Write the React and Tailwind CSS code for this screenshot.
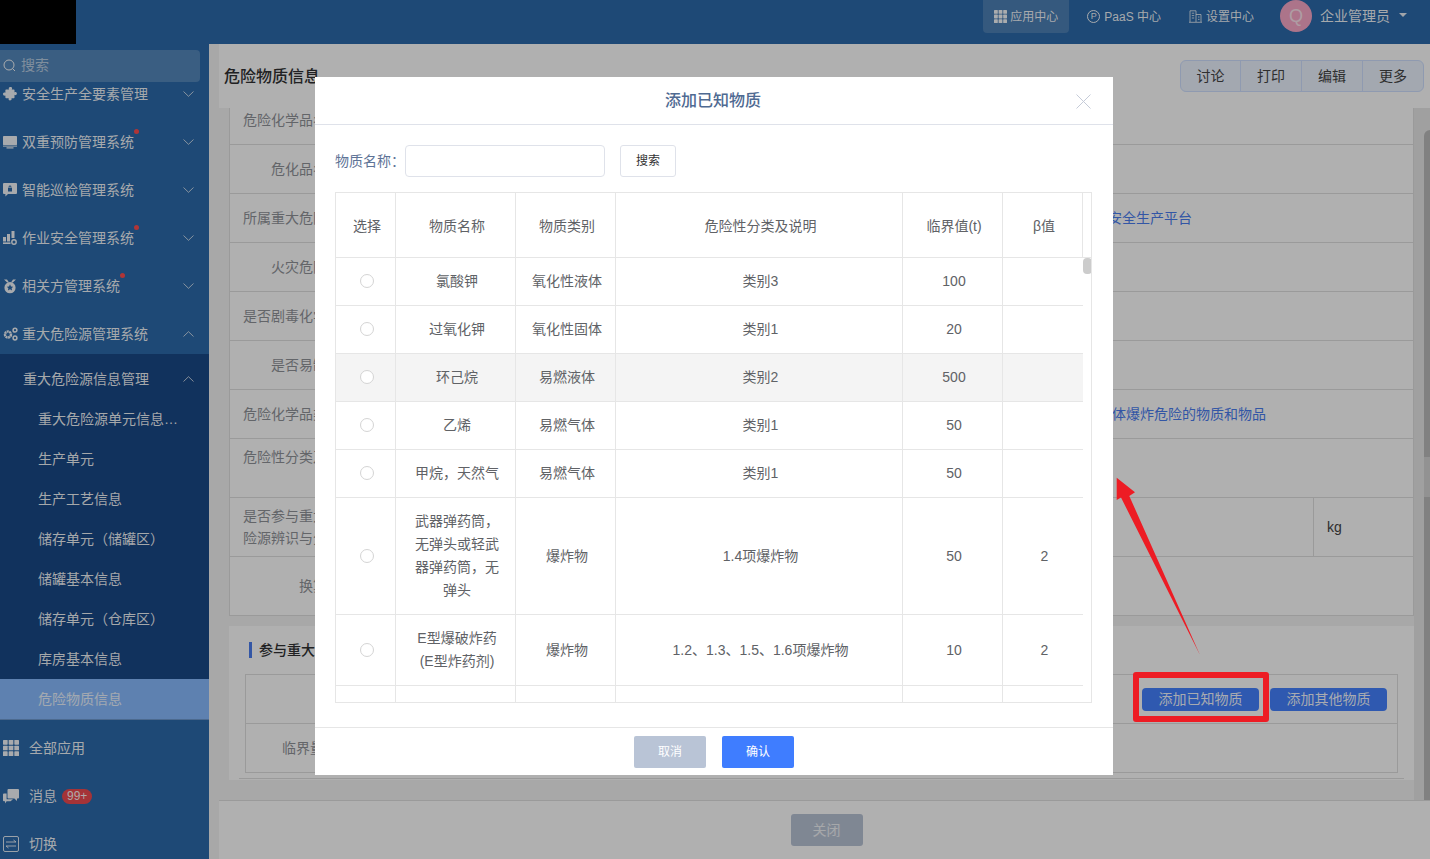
import React from "react";

const Chevron = ({ up }) => (
  <svg width="11" height="6" viewBox="0 0 11 6" fill="none" stroke="currentColor" strokeWidth="0.9" className="text-white/80">
    <path d={up ? "M0.5 5.5 5.5 0.7 10.5 5.5" : "M0.5 0.5 5.5 5.3 10.5 0.5"} />
  </svg>
);

const GridIcon = ({ size = 16, gap = 1 }) => {
  const cell = (size - gap * 2) / 3;
  const cells = [];
  for (let r = 0; r < 3; r++) {
    for (let c = 0; c < 3; c++) {
      cells.push(<rect key={`${r}-${c}`} x={c * (cell + gap)} y={r * (cell + gap)} width={cell} height={cell} rx="0.6" />);
    }
  }
  return (
    <svg width={size} height={size} viewBox={`0 0 ${size} ${size}`} fill="currentColor">
      {cells}
    </svg>
  );
};

const PuzzleIcon = () => (
  <svg width="14" height="14" viewBox="0 0 14 14" fill="currentColor">
    <path d="M4.6 2.4h1.6c-.5-.6-.6-1-.4-1.5C6.1.2 6.800 0 7.500 0c.9 0 1.500.5 1.600 1.100.1.500-.1.900-.4 1.300h2.100c.4 0 .7.300.7.700v2.300c.5-.4 1-.5 1.500-.3.600.3.900.9.900 1.500s-.4 1.300-1 1.500c-.5.100-1 0-1.400-.4v2.900c0 .4-.3.700-.7.700H8.400c.3.400.4.900.2 1.300-.2.500-.8.800-1.500.8s-1.300-.4-1.500-.9c-.100-.4 0-.8.300-1.200H3.100c-.4 0-.7-.3-.7-.7V8.400c-.4.300-.8.400-1.200.2C.5 8.400 0 7.800 0 7s.5-1.400 1.200-1.500c.4-.1.800 0 1.200.3V3.100c0-.4.300-.7.700-.7h1.500Z" />
  </svg>
);

const MonitorIcon = () => (
  <svg width="14" height="14" viewBox="0 0 14 14" fill="currentColor">
    <rect x="0" y="1" width="14" height="9" rx="0.4" />
    <rect x="0" y="10.600" width="14" height="1" />
    <rect x="3.500" y="12.300" width="7" height="1.200" />
  </svg>
);

const LockChatIcon = () => (
  <svg width="14" height="14" viewBox="0 0 14 14" fill="currentColor">
    <path fillRule="evenodd" d="M1 0h12a1 1 0 0 1 1 1v9a1 1 0 0 1-1 1H5l-2.600 2.600V11H1a1 1 0 0 1-1-1V1a1 1 0 0 1 1-1Zm4.600 5V4a1.400 1.400 0 0 1 2.800 0v1H9v3.400H5V5h.6Zm.8 0h1.200V4a.6.6 0 0 0-1.200 0v1Z" />
  </svg>
);

const BarsGearIcon = () => (
  <svg width="14" height="14" viewBox="0 0 14 14" fill="currentColor">
    <rect x="0" y="6" width="3" height="4.500" />
    <rect x="4" y="3" width="3" height="7.500" />
    <rect x="8.500" y="0" width="3" height="7" />
    <rect x="0" y="11.400" width="7.500" height="1.600" />
    <circle cx="11" cy="11" r="2.200" fill="none" stroke="currentColor" strokeWidth="1.400" />
  </svg>
);

const MedalIcon = () => (
  <svg width="15" height="15" viewBox="0 0 14 14" fill="currentColor">
    <path d="M1 0h3l2 3H4.200L1 0Zm12 0h-3L8 3h1.800L13 0Z" />
    <path fillRule="evenodd" d="M7 2.600a5.600 5.600 0 1 1 0 11.200A5.600 5.600 0 0 1 7 2.600Zm0 2.200L8 7l2.200.2L8.600 8.700l.5 2.200L7 9.800l-2.100 1.100.5-2.200L3.800 7.200 6 7l1-2.200Z" />
  </svg>
);

const GearsIcon = () => (
  <svg width="15" height="14" viewBox="0 0 15 14" fill="none" stroke="currentColor">
    <circle cx="5" cy="7.500" r="3" strokeWidth="2.400" strokeDasharray="2 0.5" />
    <circle cx="12" cy="3.200" r="1.900" strokeWidth="1.500" />
    <circle cx="12" cy="11" r="1.900" strokeWidth="1.500" />
  </svg>
);

const ChatsIcon = () => (
  <svg width="16" height="15" viewBox="0 0 16 15" fill="currentColor">
    <path d="M5.500 0H15a1 1 0 0 1 1 1v7.500a1 1 0 0 1-1 1h-1V12l-2.600-2.500H5.500a1 1 0 0 1-1-1V1a1 1 0 0 1 1-1Z" />
    <path d="M0 5.500a1 1 0 0 1 1-1h2.600v5.800H10L7.500 12.200H3.600L2 14.500v-2.300H1a1 1 0 0 1-1-1V5.500Z" />
  </svg>
);

const SwitchIcon = () => (
  <svg width="16" height="16" viewBox="0 0 16 16" fill="none" stroke="currentColor" strokeWidth="0.9">
    <rect x="0.5" y="0.5" width="15" height="15" rx="1.500" />
    <path d="M3 6h10l-2.500-2M13 10H3l2.500 2" />
  </svg>
);

const BuildingIcon = () => (
  <svg width="13" height="13" viewBox="0 0 13 13" fill="none" stroke="currentColor" strokeWidth="0.8">
    <path d="M1 12V0.8h6V12M7 4.500h5V12M0 12.300h13M2.800 3.200h2.400M2.800 5.600h2.400M2.800 8h2.400M9 7h1.500M9 9.400h1.500" />
  </svg>
);

const menus = [
  { label: "安全生产全要素管理", icon: <PuzzleIcon /> },
  { label: "双重预防管理系统", icon: <MonitorIcon />, dot: true },
  { label: "智能巡检管理系统", icon: <LockChatIcon /> },
  { label: "作业安全管理系统", icon: <BarsGearIcon />, dot: true },
  { label: "相关方管理系统", icon: <MedalIcon />, dot: true },
];

const subMenus = ["重大危险源单元信息管理", "生产单元", "生产工艺信息", "储存单元（储罐区）", "储罐基本信息", "储存单元（仓库区）", "库房基本信息"];

const Sidebar = () => (
  <aside className="flex h-full w-[209px] shrink-0 flex-col overflow-hidden bg-[#2c6aab] text-[14px] text-white/95">
    <div className="mt-[6px] mr-[9px] flex h-8 shrink-0 items-center gap-[5px] rounded-r-[4px] bg-[#5488bd] pb-[2px] pl-[3px] relative">
      <svg width="13" height="13" viewBox="0 0 13 13" fill="none" stroke="currentColor" strokeWidth="1">
        <circle cx="6" cy="6" r="5" />
        <path d="M9.6 9.6 12 12" />
      </svg>
      <span className="text-white/60">搜索</span>
    </div>
    <div className="-mt-3 shrink-0">
      {menus.map((m) => (
        <div key={m.label} className="flex h-12 items-center justify-between pl-[3px] pr-[15px]">
          <div className="flex items-center gap-[5px]">
            <span className="flex w-[14px] justify-center">{m.icon}</span>
            <span className="relative">
              {m.label}
              {m.dot && <span className="absolute -right-[5px] -top-[3px] h-[5px] w-[5px] rounded-full bg-[#ff4d4f]" />}
            </span>
          </div>
          <Chevron />
        </div>
      ))}
      <div className="flex h-11 items-center justify-between pl-[3px] pr-[15px] pt-1">
        <div className="flex items-center gap-[4px]">
          <GearsIcon />
          <span>重大危险源管理系统</span>
        </div>
        <Chevron up />
      </div>
    </div>
    <div className="shrink-0 bg-[#1a4987] pt-[5px]">
      <div className="flex h-10 items-center justify-between pl-[23px] pr-[15px]">
        <span>重大危险源信息管理</span>
        <Chevron up />
      </div>
      {subMenus.map((s) => (
        <div key={s} className="flex h-10 items-center pl-[38px] pr-[30px]">
          <span className="truncate">{s}</span>
        </div>
      ))}
      <div className="flex h-[41px] items-center border-b border-[#6f9ad0] bg-[#88bbff] pl-[38px] text-white/85">危险物质信息</div>
    </div>
    <div className="mt-1 shrink-0">
      <div className="flex h-12 items-center gap-[10px] pl-[3px]">
        <GridIcon size={16} />
        <span>全部应用</span>
      </div>
      <div className="flex h-12 items-center gap-[10px] pl-[3px]">
        <ChatsIcon />
        <span>消息</span>
        <span className="-ml-[5px] rounded-full bg-[#f04a50] px-[5px] text-[12px] leading-[15px]">99+</span>
      </div>
      <div className="flex h-12 items-center gap-[10px] pl-[3px]">
        <SwitchIcon />
        <span>切换</span>
      </div>
    </div>
  </aside>
);

const Header = () => (
  <header className="flex h-11 shrink-0 items-start justify-between bg-[#2c6aab] text-white/95">
    <div className="h-11 w-[76px]" />
    <div className="flex items-start text-[12px]">
      <div className="flex h-[33px] w-[86px] items-center gap-[3px] rounded-b-[4px] bg-[#4d81b7] pl-[11px]">
        <GridIcon size={13} gap={0.8} />
        <span>应用中心</span>
      </div>
      <div className="ml-[18px] flex h-[33px] items-center gap-[4px]">
        <span className="flex h-[13px] w-[13px] items-center justify-center rounded-full border border-current text-[9px] leading-none">P</span>
        <span>PaaS 中心</span>
      </div>
      <div className="ml-[28px] flex h-[33px] items-center gap-[4px]">
        <BuildingIcon />
        <span>设置中心</span>
      </div>
      <div className="ml-[26px] flex h-8 w-8 items-center justify-center rounded-full bg-[#f9a8c8] text-[18px] text-white/70">Q</div>
      <div className="ml-2 flex h-8 items-center text-[14px]">企业管理员</div>
      <div className="ml-[9px] mr-[23px] mt-[13px] h-0 w-0 border-x-[4px] border-t-[4px] border-x-transparent border-t-white/90" />
    </div>
  </header>
);

const formRows = [
  { label: "危险化学品名称", h: "h-[50px]" },
  { label: "危化品名称", h: "h-[49px]" },
  { label: "所属重大危险源", h: "h-[49px]", link: "安全生产平台", pl: "pl-[752px]" },
  { label: "火灾危险性", h: "h-[49px]" },
  { label: "是否剧毒化学品", h: "h-[49px]" },
  { label: "是否易制毒", h: "h-[49px]" },
  { label: "危险化学品类型", h: "h-[49px]", link: "体爆炸危险的物质和物品", pl: "pl-[756px]" },
  { label: "危险性分类及说明", h: "h-[59px]" },
  { label: "是否参与重大危险源辨识与分级", h: "h-[59px]", unit: "kg" },
  { label: "换算值", h: "h-[58px]" },
];

const FormTable = () => (
  <div className="border border-t-0 border-[#dfdfdf] bg-white text-[14px] leading-[22px] text-[#909399]">
    {formRows.map((r) => (
      <div key={r.label} className={`flex ${r.h} border-b border-[#dfdfdf] last:border-b-0`}>
        <div className="flex w-[126px] shrink-0 items-center justify-end pl-[12px] pr-[15px] text-right">
          <span className="w-[99px]">{r.label}</span>
        </div>
        <div className={`flex flex-1 items-center ${r.pl || ""} text-[#4a7df0]`}>{r.link}</div>
        {r.unit && <div className="flex w-[100px] items-center border-l border-[#dfdfdf] pl-[13px] text-[#444]">{r.unit}</div>}
      </div>
    ))}
  </div>
);

const Section = () => (
  <div className="mt-[10px] h-[154px] bg-white px-4 pt-4">
    <div className="flex h-4 items-center gap-[7px] pl-1 text-[14px] font-medium text-[#303133]">
      <span className="h-4 w-[3px] bg-[#4a7df0]" />
      参与重大危险源辨识物质
    </div>
    <div className="mt-4 border border-[#dfdfdf] text-[14px] text-[#909399]">
      <div className="flex h-[49px] items-center justify-end gap-[11px] border-b border-[#dfdfdf] pr-[10px]">
        <button className="h-[23px] w-[117px] rounded-[4px] bg-[#4482ff] text-white/95">添加已知物质</button>
        <button className="h-[23px] w-[117px] rounded-[4px] bg-[#4482ff] text-white/95">添加其他物质</button>
      </div>
      <div className="flex h-[48px] items-center pl-9">临界量</div>
    </div>
    <div className="-mx-[6px] mt-[5px] border-b border-[#dfdfdf]" />
  </div>
);

const Main = () => (
  <main className="flex min-w-0 flex-1 flex-col bg-[#f3f3f3] pl-[10px]">
    <div className="flex h-[64px] shrink-0 items-start justify-between bg-white pl-[5px] pr-[6px] pt-4">
      <h1 className="mt-px text-[16px] font-medium leading-[32px] text-[#303133]">危险物质信息</h1>
      <div className="flex h-8 overflow-hidden rounded-[6px] border border-[#cfe0ff] bg-[#ecf3ff] text-[14px] text-[#444]">
        <span className="flex w-[59px] items-center justify-center">讨论</span>
        <span className="flex w-[61px] items-center justify-center border-l border-[#cfe0ff]">打印</span>
        <span className="flex w-[61px] items-center justify-center border-l border-[#cfe0ff]">编辑</span>
        <span className="flex w-[61px] items-center justify-center border-l border-[#cfe0ff]">更多</span>
      </div>
    </div>
    <div className="flex min-h-0 flex-1 overflow-hidden">
      <div className="w-[1195px] shrink-0 pl-[10px]">
        <div className="-mt-[13px]">
          <FormTable />
        </div>
        <Section />
      </div>
      <div className="flex flex-1 justify-end bg-[#e8e8e8] pt-[22px]">
        <div className="h-[670px] w-[6px] rounded-tl-[6px] bg-[#bbbbbb] pt-[327px]">
          <div className="h-10 bg-[#d4d4d4]" />
        </div>
      </div>
    </div>
    <div className="flex h-[59px] shrink-0 items-start justify-center border-t border-[#dfdfdf] bg-white pl-1 pt-[13px]">
      <button className="h-8 w-[72px] rounded-[3px] bg-[#b9c4d6] text-[14px] text-white/80">关闭</button>
    </div>
  </main>
);

const rows = [
  ["氯酸钾", "氧化性液体", "类别3", "100", ""],
  ["过氧化钾", "氧化性固体", "类别1", "20", ""],
  ["环己烷", "易燃液体", "类别2", "500", ""],
  ["乙烯", "易燃气体", "类别1", "50", ""],
  ["甲烷，天然气", "易燃气体", "类别1", "50", ""],
  ["武器弹药筒，无弹头或轻武器弹药筒，无弹头", "爆炸物", "1.4项爆炸物", "50", "2"],
  ["E型爆破炸药(E型炸药剂)", "爆炸物", "1.2、1.3、1.5、1.6项爆炸物", "10", "2"],
  ["", "", "", "", ""],
];

const Cols = () => (
  <colgroup>
    <col className="w-[60px]" />
    <col className="w-[120px]" />
    <col className="w-[100px]" />
    <col className="w-[287px]" />
    <col className="w-[100px]" />
    <col className="w-[80px]" />
  </colgroup>
);

const cellCls = "border-b border-[#e6e6e6] py-3 text-center font-normal";

const Modal = () => (
  <div className="absolute left-[315px] top-[77px] flex h-[698px] w-[798px] flex-col bg-white">
    <div className="flex h-[48px] shrink-0 items-center justify-center border-b border-[#dfe2ea] pr-[2px] text-[16px] font-medium text-[#4f6a92]">
      添加已知物质
      <svg width="15" height="15" viewBox="0 0 15 15" fill="none" stroke="#c5cbd8" strokeWidth="1" className="absolute right-[22px] top-[17px]">
        <path d="M0.5 0.5 14.5 14.5M14.5 0.5 0.5 14.5" />
      </svg>
    </div>
    <div className="flex min-h-0 flex-1 flex-col px-5 pt-5">
      <div className="flex h-8 shrink-0 items-center text-[14px] text-[#5e7396]">
        <span className="w-[70px]">物质名称：</span>
        <div className="h-8 w-[200px] rounded-[4px] border border-[#dfe2ea]" />
        <button className="ml-[15px] h-8 w-[56px] rounded-[3px] border border-[#dfe2ea] text-[12px] text-[#333]">搜索</button>
      </div>
      <div className="mt-[15px] flex h-[511px] w-[757px] flex-col overflow-hidden border border-[#e6e6e6] text-[14px] leading-[23px] text-[#606266]">
        <div className="shrink-0 border-b border-[#e6e6e6]">
          <table className="w-[747px] table-fixed border-separate border-spacing-0">
            <Cols />
            <thead>
              <tr className="h-[64px]">
                {["选择", "物质名称", "物质类别", "危险性分类及说明", "临界值(t)", "β值"].map((t) => (
                  <th key={t} className="border-r border-[#e6e6e6] pl-[3px] pt-[2px] text-center font-normal">
                    {t}
                  </th>
                ))}
              </tr>
            </thead>
          </table>
        </div>
        <div className="flex min-h-0 flex-1">
          <table className="h-fit w-[747px] shrink-0 table-fixed border-separate border-spacing-0">
            <Cols />
            <tbody>
              {rows.map((r, i) => (
                <tr key={i} className={i === 2 ? "bg-[#f4f4f4]" : ""}>
                  <td className={`${cellCls} border-r pl-[3px]`}>
                    {r[0] ? (
                      <span className="inline-block h-[14px] w-[14px] translate-y-[2px] rounded-full border border-[#d4d4d4] bg-white" />
                    ) : (
                      <span className="inline-block h-[23px]" />
                    )}
                  </td>
                  {r.map((v, j) => (
                    <td key={j} className={`${cellCls} ${j === 4 ? "" : "border-r"} ${j === 0 ? "pl-[18px] pr-[15px]" : "pl-[11px] pr-2"}`}>
                      {v}
                    </td>
                  ))}
                </tr>
              ))}
            </tbody>
          </table>
          <div className="flex-1">
            <div className="h-[16px] w-[9px] rounded-[4px] bg-[#cccccc]" />
          </div>
        </div>
      </div>
    </div>
    <div className="flex h-[48px] shrink-0 items-start justify-center gap-4 border-t border-[#e6e6e6] pt-2 text-[12px] text-white">
      <button className="h-8 w-[72px] rounded-[2px] bg-[#b9c4d6]">取消</button>
      <button className="h-8 w-[72px] rounded-[2px] bg-[#3f7dff]">确认</button>
    </div>
  </div>
);

export default function App() {
  return (
    <div className="relative flex h-[859px] w-[1430px] flex-col overflow-hidden font-['Liberation_Sans','Noto_Sans_CJK_SC',sans-serif]">
      <Header />
      <div className="flex min-h-0 flex-1">
        <Sidebar />
        <Main />
      </div>
      {/* mask under the dialog */}
      <div className="absolute inset-0 bg-[rgba(0,0,0,0.31)]" />
      <div className="absolute left-0 top-0 h-11 w-[76px] bg-black" />
      <Modal />
      {/* red annotation on top of the shot */}
      <div className="absolute left-[1133px] top-[672px] h-[50px] w-[136px] rounded-[3px] border-[6px] border-[#ed1c24]" />
      <svg className="absolute left-[1110px] top-[470px]" width="100" height="190" viewBox="0 0 100 190" fill="#ed1c24">
        <path d="M6.700 7.700 25 22.300 19.300 26 90 185 11 27.500 6.700 30Z" />
      </svg>
    </div>
  );
}
